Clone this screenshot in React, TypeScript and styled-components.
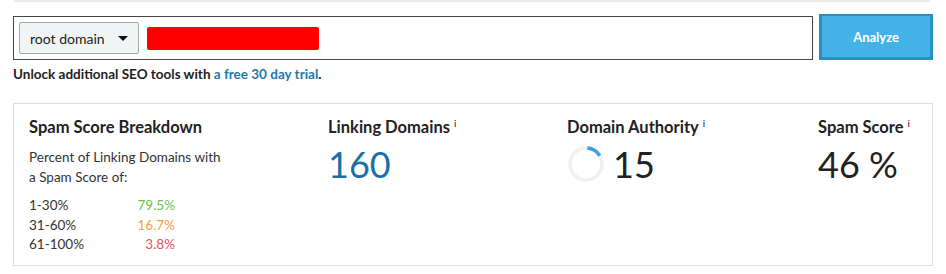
import React from "react";
import styled, { createGlobalStyle } from "styled-components";

const Global = createGlobalStyle`
  html, body { margin: 0; padding: 0; background: #fff; }
  body { font-family: Lato, "Open Sans", sans-serif; color: #222; }
`;

const Page = styled.div`
  width: 946px;
  height: 274px;
  padding: 0 13px;
  box-sizing: border-box;
  display: flex;
  flex-direction: column;
`;

const TopStrip = styled.div`
  height: 2px;
  margin: 0 3px 0 1px;
  background: #ececec;
`;

const SearchRow = styled.div`
  display: flex;
  gap: 6px;
  margin-top: 13px;
  height: 45px;
`;

const InputBox = styled.div`
  width: 801px;
  height: 44px;
  box-sizing: border-box;
  margin-top: 1px;
  border: 1px solid #444;
  display: flex;
  align-items: center;
  padding: 0 5px;
  gap: 8px;
`;

const Select = styled.div`
  width: 120px;
  height: 32px;
  box-sizing: border-box;
  border: 1px solid #a4a9a9;
  border-radius: 2px;
  background: #f1f4f4;
  display: flex;
  align-items: center;
  padding: 0 0 0 10px;
  font-size: 14px;
  color: #222;
`;

const Caret = styled.span`
  margin-left: 13px;
  width: 0;
  height: 0;
  border-left: 5px solid transparent;
  border-right: 5px solid transparent;
  border-top: 5px solid #111;
`;

const Redacted = styled.div`
  width: 172px;
  height: 23px;
  box-sizing: border-box;
  border: 2px solid #f00;
  border-radius: 2px;
  background: #f00;
`;

const AnalyzeButton = styled.button`
  width: 114px;
  height: 46px;
  margin-top: -1px;
  box-sizing: border-box;
  border: 3px solid #2b8ec0;
  border-top-width: 2px;
  background: #44b2e6;
  color: #fff;
  font-family: Lato, sans-serif;
  font-weight: 700;
  font-size: 13px;
  cursor: pointer;
`;

const Promo = styled.p`
  margin: 6px 0 0 0;
  font-size: 13.5px;
  font-weight: 700;
  color: #222;
  line-height: 16px;
`;

const PromoLink = styled.a`
  color: #1b7aad;
  text-decoration: none;
`;

const Panel = styled.div`
  margin-top: 21px;
  width: 920px;
  height: 163px;
  box-sizing: border-box;
  border: 1px solid #dedede;
  padding: 13px 15px 0 15px;
  display: grid;
  grid-template-columns: 299px 239px 251px 1fr;
`;

const Column = styled.div`
  display: flex;
  flex-direction: column;
`;

const Heading = styled.div`
  font-size: 16.5px;
  font-weight: 700;
  color: #222;
  line-height: 20px;
  white-space: nowrap;
`;

const Info = styled.sup`
  font-size: 10px;
  font-weight: 400;
  margin-left: 4px;
  vertical-align: 6px;
  line-height: 0;
`;

const Description = styled.div`
  margin-top: 10px;
  font-size: 13.5px;
  line-height: 20px;
  color: #333;
`;

const RangeTable = styled.div`
  margin-top: 9px;
  display: grid;
  grid-template-columns: 80px 66px;
  font-size: 13.5px;
  line-height: 19.5px;
  color: #333;
`;

const RangeValue = styled.span<{ $color: string }>`
  text-align: right;
  color: ${(p) => p.$color};
`;

const BigValue = styled.div<{ $color?: string }>`
  margin-top: 5px;
  font-size: 36px;
  line-height: 44px;
  color: ${(p) => p.$color || "#222"};
  display: flex;
  align-items: center;
  gap: 8px;
`;

const Ring = ({ pct }: { pct: number }) => {
  const r = 16;
  const c = 2 * Math.PI * r;
  return (
    <svg width="38" height="38" viewBox="0 0 38 38">
      <circle cx="19" cy="19" r={r} fill="none" stroke="#eef1f2" strokeWidth="3.5" />
      <circle
        cx="19"
        cy="19"
        r={r}
        fill="none"
        stroke="#3aa3dc"
        strokeWidth="3.5"
        strokeDasharray={`${(pct / 100) * c} ${c}`}
        transform="rotate(-85 19 19)"
      />
    </svg>
  );
};

export default function App() {
  return (
    <>
      <Global />
      <Page>
        <TopStrip />
        <SearchRow>
          <InputBox>
            <Select>
              root domain
              <Caret />
            </Select>
            <Redacted />
          </InputBox>
          <AnalyzeButton>Analyze</AnalyzeButton>
        </SearchRow>
        <Promo>
          Unlock additional SEO tools with <PromoLink href="#">a free 30 day trial</PromoLink>.
        </Promo>
        <Panel>
          <Column>
            <Heading>Spam Score Breakdown</Heading>
            <Description>
              Percent of Linking Domains with
              <br />a Spam Score of:
            </Description>
            <RangeTable>
              <span>1-30%</span>
              <RangeValue $color="#6abf50">79.5%</RangeValue>
              <span>31-60%</span>
              <RangeValue $color="#f4a040">16.7%</RangeValue>
              <span>61-100%</span>
              <RangeValue $color="#e8505f">3.8%</RangeValue>
            </RangeTable>
          </Column>
          <Column>
            <Heading>
              Linking Domains<Info>i</Info>
            </Heading>
            <BigValue $color="#1a6fa8">160</BigValue>
          </Column>
          <Column>
            <Heading>
              Domain Authority<Info>i</Info>
            </Heading>
            <BigValue>
              <Ring pct={15} />
              15
            </BigValue>
          </Column>
          <Column>
            <Heading>
              Spam Score<Info>i</Info>
            </Heading>
            <BigValue>46 %</BigValue>
          </Column>
        </Panel>
      </Page>
    </>
  );
}
